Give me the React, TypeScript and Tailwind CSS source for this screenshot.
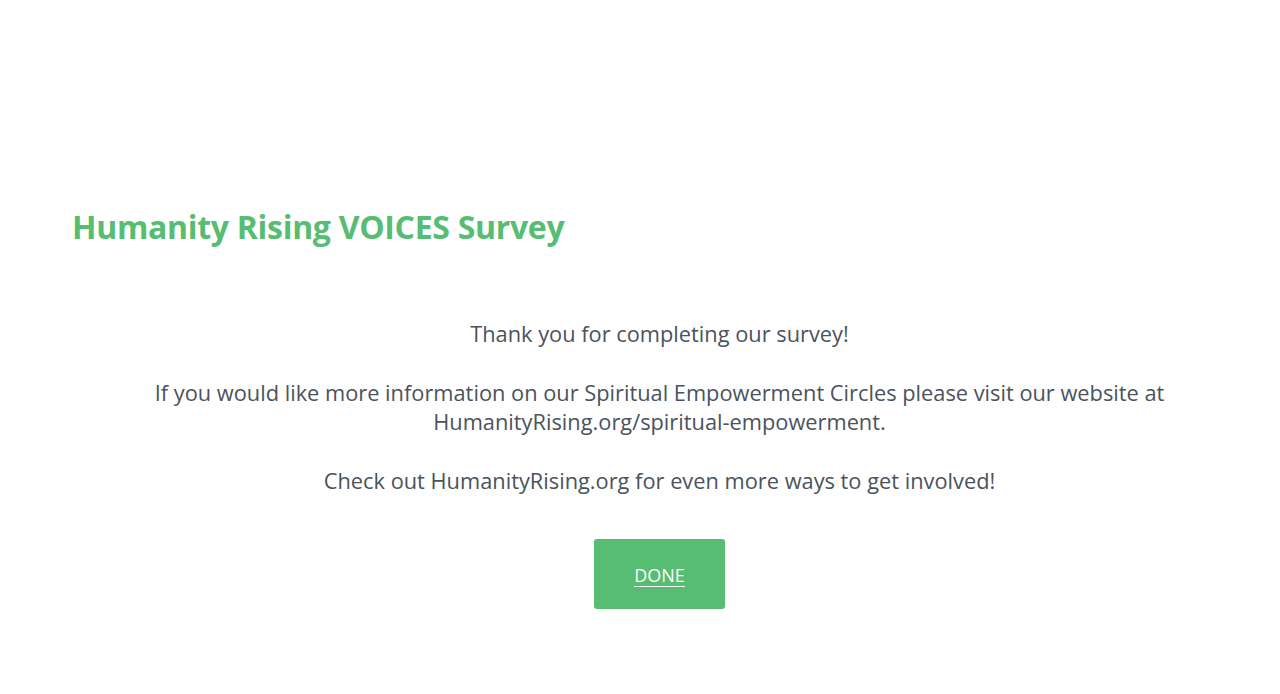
import React from 'react';

const App: React.FC = () => {
  return (
    <div className="min-h-[694px] w-full bg-white pl-[72px] pr-[33px] font-['Open_Sans',sans-serif]">
      <div className="pt-[203px]">
        <h1 className="text-[32px] font-bold leading-[48px] tracking-[-0.3px] text-[#57bd72]">
          Humanity Rising VOICES Survey
        </h1>
      </div>

      <div className="mt-[68px] flex flex-col items-center text-center text-[21.8px] leading-[29px] text-[#4b535c]">
        <p>Thank you for completing our survey!</p>
        <p className="mt-[30px]">
          If you would like more information on our Spiritual Empowerment Circles please visit our website at
          <br />
          HumanityRising.org/spiritual-empowerment.
        </p>
        <p className="mt-[30px]">Check out HumanityRising.org for even more ways to get involved!</p>

        <button className="mt-[44px] flex h-[70px] w-[131px] items-center justify-center rounded-[3px] bg-[#57bd72] pt-[2px] text-[18px] text-white underline underline-offset-4">
          DONE
        </button>
      </div>
    </div>
  );
};

export default App;
